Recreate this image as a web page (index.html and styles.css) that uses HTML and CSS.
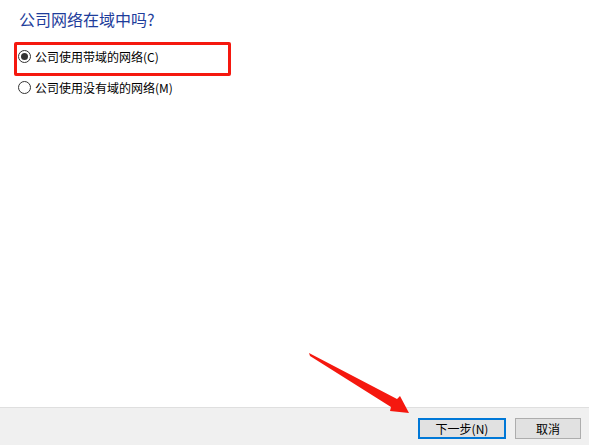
FILE: index.html
```html
<!DOCTYPE html>
<html lang="zh-CN">
<head>
<meta charset="utf-8">
<link rel="stylesheet" href="styles.css">
</head>
<body>
<div class="page">
  <div class="main">
    <h1 class="title">公司网络在域中吗?</h1>
    <div class="options">
      <label class="option"><span class="radio checked"></span><span>公司使用带域的网络(C)</span></label>
      <label class="option"><span class="radio"></span><span>公司使用没有域的网络(M)</span></label>
    </div>
    <div class="highlight"></div>
  </div>
  <div class="footer">
    <button class="btn primary">下一步(N)</button>
    <button class="btn">取消</button>
  </div>
  <svg class="arrow" width="589" height="445" viewBox="0 0 589 445">
    <polygon points="309,353 397,399 400,396 409,413 390,411 391,407 310,356" fill="#f5180f"/>
  </svg>
</div>
</body>
</html>
```
FILE: styles.css
```css
html, body {
  margin: 0;
  padding: 0;
  background: #ffffff;
}
body {
  font-family: "Noto Sans CJK SC", "Liberation Sans", sans-serif;
  color: #000;
}
.page {
  position: relative;
  width: 589px;
  height: 445px;
  display: flex;
  flex-direction: column;
  overflow: hidden;
}
.main {
  position: relative;
  flex: 1;
  padding: 8px 0 0 19px;
}
.title {
  margin: 0;
  font-size: 16px;
  font-weight: normal;
  line-height: 22px;
  color: #1e3d9b;
}
.options {
  display: flex;
  flex-direction: column;
  gap: 12px;
  margin-top: 17px;
  margin-left: -1px;
}
.option {
  display: flex;
  align-items: center;
  gap: 4px;
  font-size: 12px;
  line-height: 19px;
  height: 19px;
}
.radio {
  box-sizing: border-box;
  width: 13px;
  height: 13px;
  border: 1px solid #333;
  border-radius: 50%;
  background: #fff;
  display: flex;
  align-items: center;
  justify-content: center;
}
.radio.checked::after {
  content: "";
  width: 7px;
  height: 7px;
  border-radius: 50%;
  background: #333;
}
.highlight {
  position: absolute;
  left: 14px;
  top: 42px;
  width: 217px;
  height: 34px;
  box-sizing: border-box;
  border: 3px solid #f5180f;
  border-radius: 2px;
}
.footer {
  border-top: 1px solid #dfdfdf;
  background: #f0f0f0;
  display: flex;
  justify-content: flex-end;
  align-items: flex-start;
  gap: 9px;
  padding: 10px 8px 0 0;
  box-sizing: border-box;
  height: 38px;
}
.btn {
  font-family: "Noto Sans CJK SC", "Liberation Sans", sans-serif;
  font-size: 12px;
  height: 21px;
  width: 66px;
  padding: 0;
  background: #e1e1e1;
  border: 1px solid #adadad;
  color: #000;
  line-height: 17px;
}
.btn.primary {
  width: 88px;
  border: 2px solid #0078d7;
}
.arrow {
  position: absolute;
  left: 0;
  top: 0;
  pointer-events: none;
}
```
